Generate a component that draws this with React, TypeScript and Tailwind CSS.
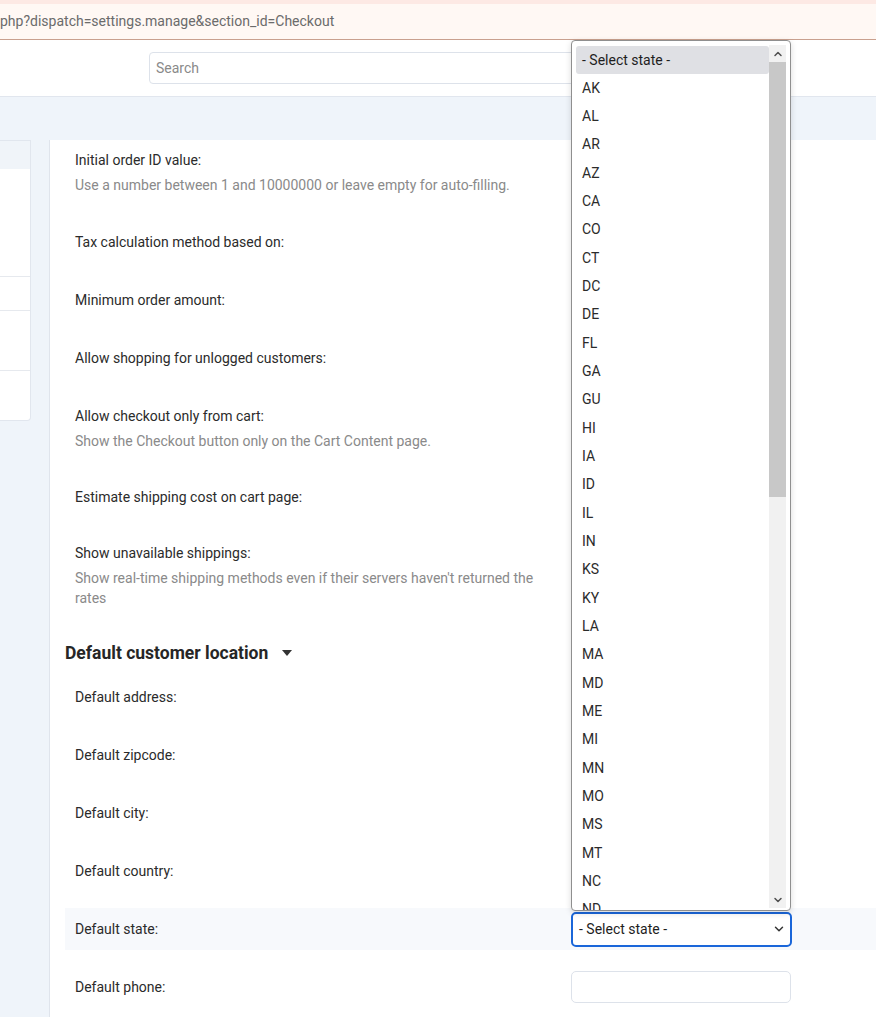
import { ChevronDown, ChevronUp } from 'lucide-react';

const STATES = [
  'AK', 'AL', 'AR', 'AZ', 'CA', 'CO', 'CT', 'DC', 'DE', 'FL', 'GA', 'GU', 'HI', 'IA', 'ID', 'IL', 'IN',
  'KS', 'KY', 'LA', 'MA', 'MD', 'ME', 'MI', 'MN', 'MO', 'MS', 'MT', 'NC', 'ND',
];

type Row = { label: string; desc?: string[]; h: string };

const GENERAL: Row[] = [
  { label: 'Initial order ID value:', desc: ['Use a number between 1 and 10000000 or leave empty for auto-filling.'], h: 'h-[82px]' },
  { label: 'Tax calculation method based on:', h: 'h-[58px]' },
  { label: 'Minimum order amount:', h: 'h-[58px]' },
  { label: 'Allow shopping for unlogged customers:', h: 'h-[58px]' },
  { label: 'Allow checkout only from cart:', desc: ['Show the Checkout button only on the Cart Content page.'], h: 'h-[81px]' },
  { label: 'Estimate shipping cost on cart page:', h: 'h-[56px]' },
  { label: 'Show unavailable shippings:', desc: ["Show real-time shipping methods even if their servers haven't returned the", 'rates'], h: 'h-[80px]' },
];

const LOCATION = ['Default address:', 'Default zipcode:', 'Default city:', 'Default country:'];

function SettingRow({ row }: { row: Row }) {
  return (
    <div className={`${row.h} px-[10px] pt-[10px]`}>
      <div className="text-[14px] leading-[20px] text-[#2b2b2b]">{row.label}</div>
      {row.desc ? (
        <div className="mt-[5px] w-[470px] text-[14px] leading-[20px] text-[#8a8a8a]">
          {row.desc.map((d) => (
            <div key={d}>{d}</div>
          ))}
        </div>
      ) : null}
    </div>
  );
}

function StateDropdown() {
  return (
    <div className="absolute left-[571px] top-[40px] z-10 flex h-[871px] w-[220px] overflow-hidden rounded-[4px] border border-[#8f8f8f] bg-white shadow-[0_2px_6px_rgba(0,0,0,0.15)]">
      <div className="flex-1 overflow-hidden pl-[4px] pt-[5px]">
        <div className="flex h-[28px] items-center rounded-[3px] bg-[#dfe0e4] px-[6px] text-[14px] text-[#1e1e1e]">- Select state -</div>
        {STATES.map((s) => (
          <div key={s} className="flex h-[28.33px] items-center px-[6px] text-[14px] text-[#2b2b2b]">
            {s}
          </div>
        ))}
      </div>
      <div className="mb-[2px] mr-[4px] mt-[4px] flex w-[17px] flex-col bg-[#f1f1f1]">
        <div className="flex h-[17px] items-center justify-center">
          <ChevronUp className="h-[12px] w-[12px] text-[#505050]" strokeWidth={3} />
        </div>
        <div className="h-[435px] bg-[#c8c8c8]" />
        <div className="flex-1" />
        <div className="flex h-[17px] items-center justify-center">
          <ChevronDown className="h-[12px] w-[12px] text-[#505050]" strokeWidth={3} />
        </div>
      </div>
    </div>
  );
}

export default function App() {
  return (
    <div className="relative h-[1017px] w-[876px] overflow-hidden bg-[#eff4fa] font-['Roboto','Liberation_Sans',sans-serif]">
      <div className="h-[4px] bg-[#fde9e4]" />
      <div className="flex h-[36px] items-center border-b border-[#c9a08e] bg-[#fff8f4] text-[14px] text-[#6b6b6b]">
        php?dispatch=settings.manage&amp;section_id=Checkout
      </div>
      <div className="flex h-[57px] items-center border-b border-[#e1e6ee] bg-white">
        <div className="ml-[149px] flex h-[32px] w-[560px] items-center rounded-[4px] border border-[#dde2ea] px-[6px] pt-[1px] text-[14px] text-[#8a8a8a]">
          Search
        </div>
      </div>
      <div className="flex gap-[18px] pt-[43px]">
        <div className="h-[281px] w-[31px] rounded-br-[4px] border border-l-0 border-[#e1e6ee] bg-white">
          <div className="h-[28px] bg-[#f0f4f9]" />
          <div className="h-[107px]" />
          <div className="h-[34px] border-t border-[#e6e9ee]" />
          <div className="h-[60px] border-t border-[#e6e9ee]" />
          <div className="border-t border-[#e6e9ee]" />
        </div>
        <div className="h-[900px] flex-1 border-l border-[#dfe4ec] bg-white pl-[15px]">
          {GENERAL.map((r) => (
            <SettingRow key={r.label} row={r} />
          ))}
          <div className="flex h-[63px] items-start gap-[14px] pt-[29px]">
            <span className="text-[17.5px] font-bold leading-[22px] text-[#262626]">Default customer location</span>
            <svg width="10" height="6" viewBox="0 0 10 6" className="mt-[8px]">
              <path d="M0 0h10L5 6z" fill="#333" />
            </svg>
          </div>
          {LOCATION.map((l) => (
            <div key={l} className="mb-[16px] flex h-[42px] items-center px-[10px] text-[14px] text-[#2b2b2b]">
              {l}
            </div>
          ))}
          <div className="flex h-[42px] items-center bg-[#f7f9fc] px-[10px] text-[14px] text-[#2b2b2b]">
            <span className="w-[496px]">Default state:</span>
            <div className="flex h-[35px] w-[221px] items-center justify-between rounded-[5px] border-2 border-[#1a66d9] bg-white pl-[6px] pr-[4px] text-[14px] text-[#1e1e1e]">
              - Select state -
              <ChevronDown className="h-[14px] w-[14px] text-[#333]" strokeWidth={2.5} />
            </div>
          </div>
          <div className="flex h-[74px] items-center px-[10px] text-[14px] text-[#2b2b2b]">
            <span className="w-[496px]">Default phone:</span>
            <div className="h-[32px] w-[220px] rounded-[5px] border border-[#dde2ea] bg-white" />
          </div>
        </div>
      </div>
      <StateDropdown />
    </div>
  );
}
